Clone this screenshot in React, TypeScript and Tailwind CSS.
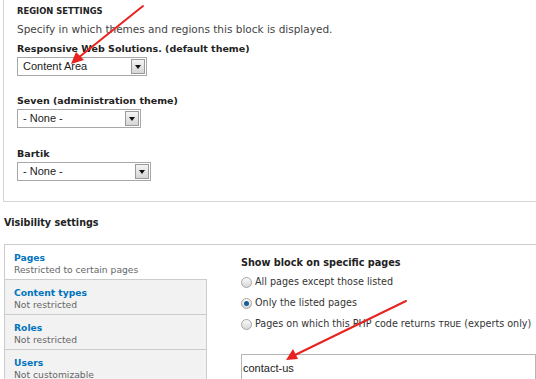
import React from 'react';

const labelFont = { fontFamily: '"DejaVu Sans", Verdana, sans-serif' };
const fieldFont = { fontFamily: '"Liberation Sans", Arial, sans-serif' };

const Select: React.FC<{ value: string; width: string }> = ({ value, width }) => (
  <div
    className={`flex items-center justify-between h-[19px] border border-[#a8a8a8] bg-white pl-[5px] pr-[1px] ${width}`}
  >
    <span className="text-[11px] text-[#222]" style={fieldFont}>
      {value}
    </span>
    <span className="flex items-center justify-center w-[14px] h-[15px] border border-[#9a9a9a] bg-gradient-to-b from-[#f4f4f4] to-[#d6d6d6]">
      <span className="block w-0 h-0 border-l-[3px] border-r-[3px] border-t-[4px] border-l-transparent border-r-transparent border-t-[#111]" />
    </span>
  </div>
);

const Radio: React.FC<{ checked?: boolean }> = ({ checked }) => (
  <span className="flex items-center justify-center w-[11px] h-[11px] rounded-full border border-[#a5a5a5] bg-gradient-to-b from-[#fafafa] to-[#d8d8d8]">
    {checked && <span className="block w-[5px] h-[5px] rounded-full bg-[#1b5b96]" />}
  </span>
);

const tabs = [
  { title: 'Pages', desc: 'Restricted to certain pages', active: true },
  { title: 'Content types', desc: 'Not restricted' },
  { title: 'Roles', desc: 'Not restricted' },
  { title: 'Users', desc: 'Not customizable' },
];

const options = [
  { label: 'All pages except those listed' },
  { label: 'Only the listed pages', checked: true },
  { label: 'Pages on which this PHP code returns', code: 'TRUE', tail: '(experts only)' },
];

export default function App() {
  return (
    <div className="relative w-[536px] h-[379px] overflow-hidden bg-white text-[#333]" style={labelFont}>
      {/* region settings fieldset */}
      <div className="ml-[3px] h-[202px] border-l border-b border-[#d6d6d6] pl-[13px] pt-[4px]">
        <div className="h-[14px] text-[8.4px] font-bold leading-[14px] text-[#222]">REGION SETTINGS</div>
        <div className="mt-[4px] h-[14px] text-[10.5px] leading-[14px] text-[#444]">
          Specify in which themes and regions this block is displayed.
        </div>
        <div className="mt-[6px] h-[14px] text-[9.5px] font-bold leading-[14px] text-[#222]">
          Responsive Web Solutions. (default theme)
        </div>
        <div className="mt-[1px]">
          <Select value="Content Area" width="w-[130px]" />
        </div>
        <div className="mt-[18px] h-[14px] text-[9.5px] font-bold leading-[14px] text-[#222]">
          Seven (administration theme)
        </div>
        <div className="mt-[1px]">
          <Select value="- None -" width="w-[124px]" />
        </div>
        <div className="mt-[19px] h-[14px] text-[9.5px] font-bold leading-[14px] text-[#222]">Bartik</div>
        <div className="mt-[1px]">
          <Select value="- None -" width="w-[134px]" />
        </div>
      </div>

      {/* visibility settings */}
      <div className="pl-[4px] mt-[14px] h-[14px] text-[9.6px] font-bold leading-[14px] text-[#222]">
        Visibility settings
      </div>

      <div className="ml-[4px] mt-[14px] flex border-t border-l border-[#ccc]">
        <div className="w-[202px] shrink-0">
          {tabs.map((t) => (
            <div
              key={t.title}
              className={`h-[35px] pl-[9px] pt-[6px] border-b border-[#ccc] ${
                t.active ? 'bg-white' : 'bg-[#f2f2f2] border-r'
              }`}
            >
              <div className="text-[9.2px] font-bold leading-[13px] text-[#0074bd]">{t.title}</div>
              <div className="text-[9.2px] leading-[12px] text-[#666]">{t.desc}</div>
            </div>
          ))}
        </div>
        <div className="flex-1 pl-[34px] pt-[11px]">
          <div className="h-[14px] text-[9.7px] font-bold leading-[14px] text-[#222]">Show block on specific pages</div>
          <div className="mt-[5px] flex flex-col gap-[7px]">
            {options.map((o) => (
              <div key={o.label} className="flex items-center gap-[3px] h-[14px]">
                <Radio checked={o.checked} />
                <span className="text-[9.6px] leading-[14px] text-[#333] whitespace-nowrap">
                  {o.label}
                  {o.code && (
                    <>
                      {' '}
                      <span className="font-['Liberation_Mono',monospace] text-[9.6px]">{o.code}</span> {o.tail}
                    </>
                  )}
                </span>
              </div>
            ))}
          </div>
          <div className="mt-[23px] h-[40px] border border-[#b5b5b5] pl-[1px]">
            <span className="text-[11px] leading-[17px] text-[#222]" style={fieldFont}>
              contact-us
            </span>
          </div>
        </div>
      </div>

      {/* annotation arrows */}
      <svg className="absolute left-0 top-0 pointer-events-none" width="536" height="379">
        <g stroke="#e8231f" strokeWidth="2" fill="#e8231f" strokeLinecap="round">
          <line x1="143" y1="6" x2="78" y2="58" />
          <polygon points="71,64 76,52 84,60" stroke="none" />
          <line x1="406" y1="301" x2="295" y2="355" />
          <polygon points="286,360 293,349 298,359" stroke="none" />
        </g>
      </svg>
    </div>
  );
}
